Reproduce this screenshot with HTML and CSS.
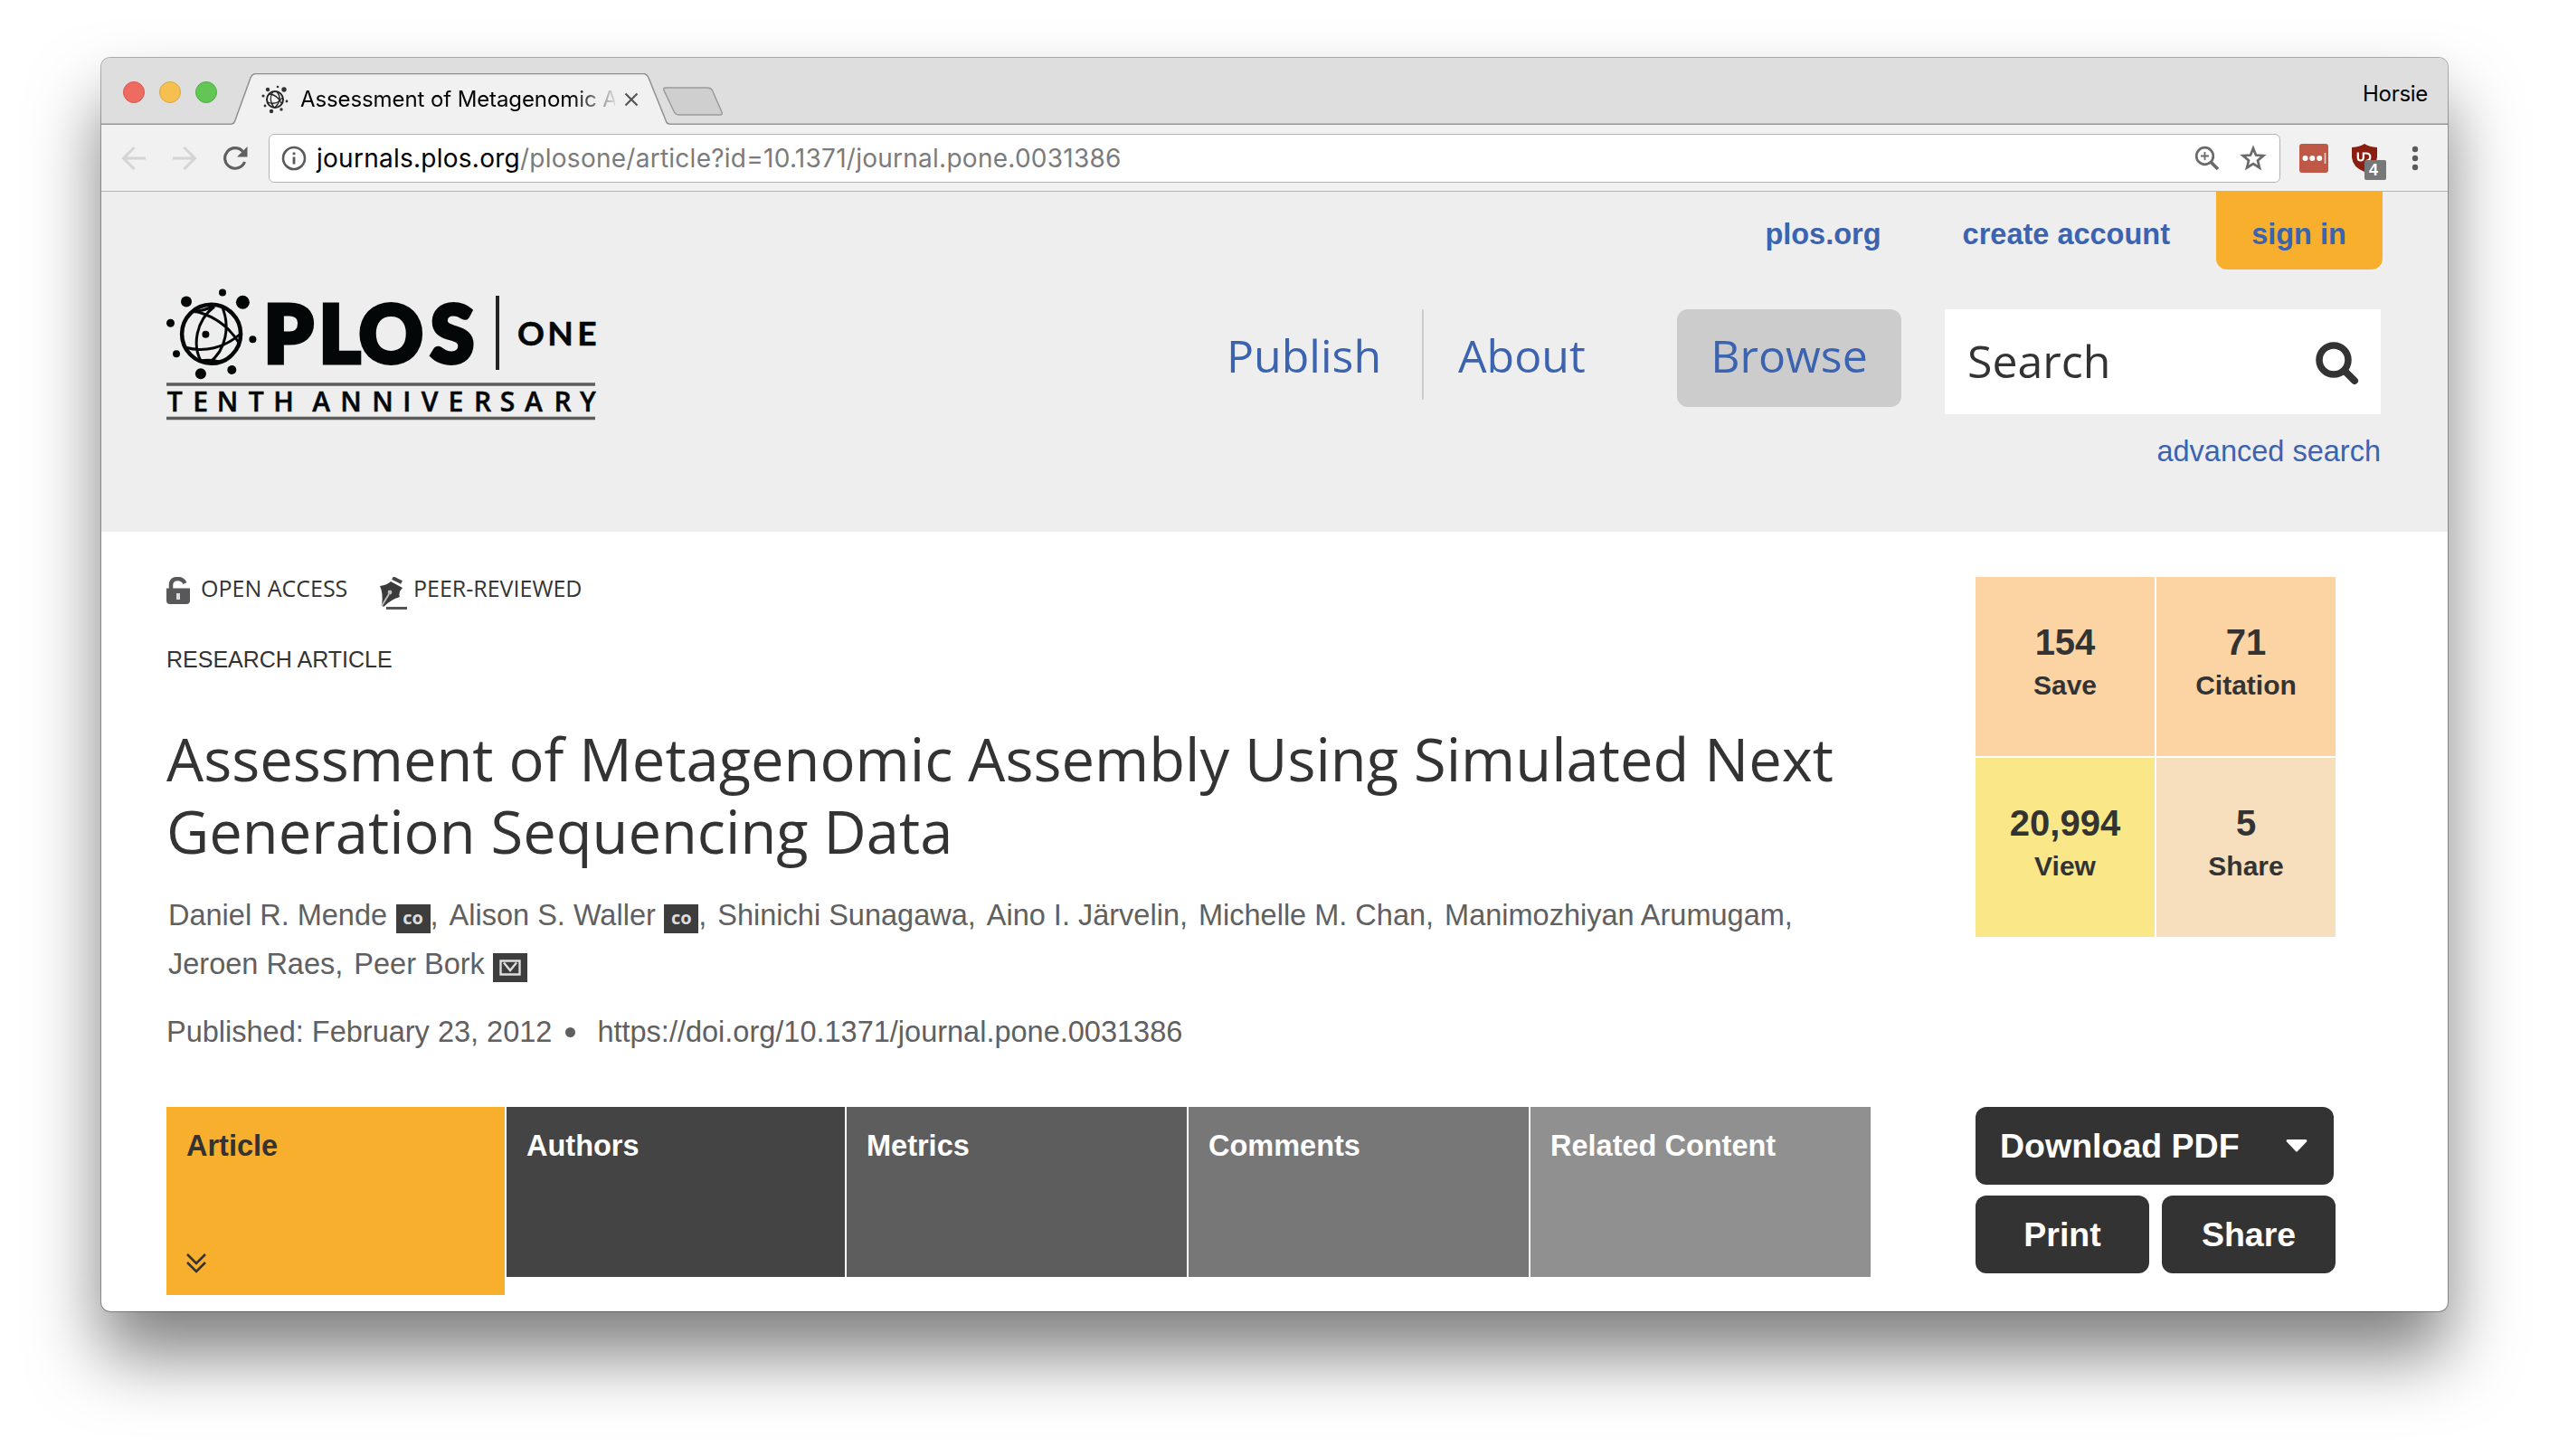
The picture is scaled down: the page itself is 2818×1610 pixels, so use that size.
FILE: index.html
```html
<!DOCTYPE html>
<html lang="en">
<head>
<meta charset="utf-8">
<title>Assessment of Metagenomic Assembly Using Simulated Next Generation Sequencing Data</title>
<link rel="stylesheet" href="styles.css">
</head>
<body>
<div class="window">
  <div class="tabstrip">
    <div class="lights"><i class="light red"></i><i class="light amber"></i><i class="light green"></i></div>
    <div class="tab">
      <svg class="tab-shape" viewBox="0 0 484 57" width="484" height="57"><path d="M0 57V56C3 56 3 54 4 52L21 5Q23 .5 27 .5H455Q459 .5 461 5L480 52Q481 56 484 56V57Z" fill="#f1f1f1"/><path d="M0 56C3 56 3 54 4 52L21 5Q23 .5 27 .5H455Q459 .5 461 5L480 52Q481 56 484 56" fill="none" stroke="#8f8f8f" stroke-width="1.5"/></svg>
      <svg class="favicon" viewBox="0 0 30 32" width="30" height="32"><g fill="none" stroke="#222" stroke-width="2"><circle cx="15" cy="16" r="9"/><path d="M13 7Q7 16 14 25M17 7Q24 16 15 25M7 19Q17 23 23 14M9 10Q18 11 22 20" stroke-width="1.3"/></g><g fill="#333"><circle cx="7" cy="5" r="2.2"/><circle cx="18" cy="2" r="1.3"/><circle cx="25" cy="5" r="2.7"/><circle cx="2" cy="12" r="1.6"/><circle cx="28" cy="18" r="1.4"/><circle cx="4" cy="23" r="1.4"/><circle cx="11" cy="29" r="2.2"/><circle cx="22" cy="27" r="1.7"/></g></svg>
      <span class="tab-title">Assessment of Metagenomic A</span>
      <svg class="tab-close" viewBox="0 0 16 16" width="16" height="16"><path d="M1.5 1.5l13 13M14.5 1.5l-13 13" stroke="#555" stroke-width="2.2"/></svg>
    </div>
    <svg class="newtab" viewBox="0 0 68 32" width="68" height="32"><path d="M4 1H50Q54 1 55.500 4L66 28Q67 31 64 31H19Q15 31 13.500 28L2 4Q1 1 4 1Z" fill="#cfcfcf" stroke="#9b9b9b" stroke-width="1.5"/></svg>
    <span class="profile">Horsie</span>
  </div>
  <div class="toolbar">
    <svg class="arrow" viewBox="0 0 28 28" width="28" height="28"><path d="M27 14H3M14.500 2L2.500 14L14.500 26" fill="none" stroke="#d4d4d4" stroke-width="3"/></svg>
    <svg class="arrow" viewBox="0 0 28 28" width="28" height="28"><path d="M1 14H25M13.500 2L25.500 14L13.500 26" fill="none" stroke="#d4d4d4" stroke-width="3"/></svg>
    <svg class="reload" viewBox="0 0 28 28" width="28" height="28"><path d="M22.500 6.500A11.300 11.300 0 1 0 24.500 18" fill="none" stroke="#5f5f5f" stroke-width="3.200"/><path d="M27.500 1V12.500H16Z" fill="#5f5f5f"/></svg>
    <div class="omnibox">
      <svg viewBox="0 0 28 28" width="28" height="28"><circle cx="14" cy="14" r="12" fill="none" stroke="#5a5a5a" stroke-width="2.600"/><path d="M12.600 12.500h2.800v8h-2.800zM12.600 7.500h2.800v2.800h-2.800z" fill="#5a5a5a"/></svg>
      <span class="url"><b>journals.plos.org</b>/plosone/article?id=10.1371/journal.pone.0031386</span>
      <svg viewBox="0 0 28 28" width="28" height="28"><g fill="none" stroke="#6a6a6a" stroke-width="2.700"><circle cx="11.500" cy="11.500" r="9.300"/><path d="M18.500 18.500L26 26" stroke-width="3.800"/><path d="M7 11.500h9M11.500 7v9" stroke-width="1.800"/></g></svg>
      <svg class="star" viewBox="0 0 30 30" width="30" height="30"><path d="M15 4L18 11.500L26.300 12.100L20 17.500L22 25.500L15 21.200L8 25.500L10 17.500L3.700 12.100L12 11.500Z" fill="none" stroke="#6a6a6a" stroke-width="2.700"/></svg>
    </div>
    <svg class="ext-dots" viewBox="0 0 32 32" width="32" height="32"><rect width="32" height="32" rx="3" fill="#c05847"/><g fill="#fff"><circle cx="6.500" cy="16" r="3"/><circle cx="14.300" cy="16" r="3"/><circle cx="22.200" cy="16" r="3"/></g><path d="M28.500 10v12" stroke="#f0cfc9" stroke-width="1.600"/></svg>
    <div class="ublock">
      <svg viewBox="0 0 28 32" width="28" height="32"><path d="M14 0Q19 3.500 28 4V15Q27 26 14 31Q1 26 0 15V4Q9 3.500 14 0Z" fill="#8a1f11"/><path d="M6.800 9.500v6q0 3 3 3t3-3V10.500h3q4.500 0 4.500 4t-4 4" fill="none" stroke="#fff" stroke-width="2.200"/></svg>
      <span class="count">4</span>
    </div>
    <svg class="menu" viewBox="0 0 8 28" width="8" height="28"><g fill="#5a5a5a"><circle cx="4" cy="4" r="3.200"/><circle cx="4" cy="14" r="3.200"/><circle cx="4" cy="24" r="3.200"/></g></svg>
  </div>

  <header class="site-header">
    <svg class="logo" viewBox="0 0 476 144" width="476" height="144">
      <g fill="#040707"><circle cx="22" cy="13.500" r="6"/><circle cx="62" cy="3.500" r="4"/><circle cx="84.400" cy="14.300" r="7.500"/><circle cx="4.500" cy="37.300" r="4.500"/><circle cx="43.400" cy="49.700" r="4"/><circle cx="95.400" cy="55.300" r="4"/><circle cx="11" cy="71.300" r="4"/><circle cx="37.900" cy="93.300" r="6"/><circle cx="72.300" cy="89" r="5"/></g>
      <g fill="none" stroke="#040707"><circle cx="49.600" cy="49.300" r="32.500" stroke-width="4.500"/><path d="M53 19C32 35 29 62 38 79M61 18C71 40 66 68 47 81M31 24C52 29 69 41 80 59M20 64C42 70 64 65 82 49M31 25Q42 23 52 19M36 79Q50 77 58 80" stroke-width="3"/></g>
      <g fill="#040707" text-anchor="middle">
        <text class="logo-name" x="135 191.500 248.300 316" y="81">PLOS</text>
        <text class="logo-one" x="402.900 435.600 465" y="61.700">ONE</text>
        <text class="logo-tag" x="9.300 37.500 67.500 99.200 129.500 150 171.100 203.900 239 265.800 291 319.900 349.500 377 406 438 465.900" y="135.200">TENTH ANNIVERSARY</text>
      </g>
      <path d="M366 7V89" stroke="#222" stroke-width="4"/><path d="M0 105H474M0 142.500H474" stroke="#5c5c5a" stroke-width="3.500"/>
    </svg>
    <div class="header-right">
      <div class="user-links"><a>plos.org</a><a>create account</a><a class="signin">sign in</a></div>
      <nav class="main-nav">
        <a class="publish">Publish</a><a class="about">About</a><a class="browse">Browse</a>
        <div class="search"><span>Search</span><svg viewBox="0 0 48 48" width="48" height="48"><circle cx="20" cy="20" r="16" fill="none" stroke="#333" stroke-width="7.500"/><path d="M32 32L43 43" stroke="#333" stroke-width="8" stroke-linecap="round"/></svg></div>
      </nav>
      <a class="advanced">advanced search</a>
    </div>
  </header>

  <main class="article">
    <section class="head">
      <div class="flags">
        <svg viewBox="0 0 26 30" width="26" height="30"><path d="M5 13V9Q5 2 12.500 2Q18 2 20.500 7" fill="none" stroke="#58585a" stroke-width="4.500"/><path d="M0 12.500H26V26Q26 30 22 30H4Q0 30 0 26Z" fill="#58585a"/><rect x="11" y="18" width="4" height="7" fill="#ddd"/></svg>
        <span class="flag-open">OPEN ACCESS</span>
        <svg viewBox="0 0 30 36" width="30" height="36"><path d="M14 1L24 6" stroke="#444" stroke-width="4"/><path d="M0 10Q8 9 12 5L25 12Q20 17 22 22Q12 25 4 33L2 31Q4 18 0 10Z" fill="#3a3a3a"/><circle cx="11" cy="17" r="2.400" fill="#bbb"/><path d="M2 32L10 19" stroke="#bbb" stroke-width="2"/><path d="M7 34.500H30" stroke="#555" stroke-width="3"/></svg>
        <span>PEER-REVIEWED</span>
      </div>
      <p class="type">RESEARCH ARTICLE</p>
      <h1>Assessment of Metagenomic Assembly Using Simulated Next Generation Sequencing Data</h1>
      <ul class="authors">
        <li>Daniel R. Mende<span class="badge">co</span>,</li><li>Alison S. Waller<span class="badge">co</span>,</li><li>Shinichi Sunagawa,</li><li>Aino I. Järvelin,</li><li>Michelle M. Chan,</li><li>Manimozhiyan Arumugam,</li><li>Jeroen Raes,</li><li>Peer Bork<span class="badge"><svg viewBox="0 0 24 18" width="24" height="18"><path d="M1.500 1.500H22.500V16.500H1.500ZM5 3.500L12 12L19 3.500" fill="none" stroke="#ddd" stroke-width="2.400"/></svg></span></li>
      </ul>
      <div class="published"><span>Published: February 23, 2012</span><i class="bullet"></i><span>https://doi.org/10.1371/journal.pone.0031386</span></div>
      <nav class="tabs">
        <a class="t1">Article<svg viewBox="0 0 24 24" width="24" height="24"><path d="M2 2L12 12L22 2M2 11L12 21L22 11" fill="none" stroke="#333" stroke-width="2.600"/></svg></a><a class="t2">Authors</a><a class="t3">Metrics</a><a class="t4">Comments</a><a class="t5">Related Content</a>
      </nav>
    </section>
    <aside class="side">
      <div class="metrics">
        <div class="m"><b>154</b><span>Save</span></div><div class="m"><b>71</b><span>Citation</span></div><div class="m view"><b>20,994</b><span>View</span></div><div class="m share"><b>5</b><span>Share</span></div>
      </div>
      <div class="actions">
        <a class="btn download">Download PDF<svg viewBox="0 0 24 14" width="24" height="14"><path d="M1.500 0H22.500Q24 1 23 2.500L13 13Q12 14 11 13L1 2.500Q0 1 1.500 0Z" fill="#fff"/></svg></a>
        <a class="btn">Print</a><a class="btn">Share</a>
      </div>
    </aside>
  </main>
</div>
</body>
</html>
```
FILE: styles.css
```css
* { box-sizing: border-box; }
body { margin: 0; padding: 64px 112px 0; height: 1610px; overflow: hidden; background: #fff; font-family: "Liberation Sans", Arial, sans-serif; font-size: 32.5px; color: #333; }
svg { display: block; flex: none; }
p, h1, ul { margin: 0; padding: 0; }
.window { width: 2594px; height: 1386px; border-radius: 10px; background: #fff; overflow: hidden; box-shadow: 0 0 0 1px rgba(0,0,0,.3), 0 48px 78px rgba(0,0,0,.5); }

/* browser chrome */
.tabstrip { display: flex; height: 74px; background: #dedede; box-shadow: inset 0 -1.5px #959595; font-family: Inter, sans-serif; font-size: 24px; color: #000; }
.lights { display: flex; gap: 16px; width: 144px; padding: 26px 0 0 24px; }
.light { width: 24px; height: 24px; border-radius: 50%; border: 1px solid; }
.red { background: #ed6b60; border-color: #d8574d; }
.amber { background: #f5c04f; border-color: #dba73e; }
.green { background: #62c655; border-color: #50ab45; }
.tab { position: relative; display: flex; width: 484px; height: 57px; margin-top: 17px; padding-left: 33px; }
.tab-shape { position: absolute; left: 0; top: 0; }
.favicon { position: relative; margin-top: 13px; }
.tab-title { position: relative; width: 348px; margin-left: 13px; line-height: 57px; letter-spacing: -.1px; white-space: nowrap; -webkit-mask-image: linear-gradient(90deg, #000 86%, rgba(0,0,0,.1)); mask-image: linear-gradient(90deg, #000 86%, rgba(0,0,0,.1)); }
.tab-close { position: relative; margin: 21px 0 0 10px; }
.newtab { margin: 32px 0 0 -8px; }
.profile { margin-left: auto; padding-right: 22px; line-height: 79px; letter-spacing: -.3px; }
.toolbar { display: flex; align-items: center; height: 74px; padding-left: 22px; background: #f1f1f1; border-bottom: 1.5px solid #b3b3b3; }
.arrow { margin-right: 28px; }
.omnibox { display: flex; align-items: center; width: 2224px; height: 54px; margin-left: 23px; padding: 0 14px 0 13px; background: #fff; border: 1.5px solid #b3b3b3; border-radius: 6px; }
.url { flex: 1; margin-left: 11px; font: 28px/50px Inter, sans-serif; letter-spacing: .26px; color: #7b7b7b; }
.url b { font-weight: 400; color: #000; }
.star { margin-left: 22px; }
.ext-dots { margin-left: 21px; }
.ublock { position: relative; margin-left: 26px; }
.count { position: absolute; left: 14px; top: 18px; width: 24px; height: 22px; border-radius: 2px; background: #777; color: #fff; font: bold 18px/22px "Liberation Sans", Arial, sans-serif; padding-left: 5px; }
.menu { margin-left: 38px; }

/* site header */
.site-header { display: flex; justify-content: space-between; height: 376px; padding: 0 72px; background: #eee; }
.logo { margin-top: 108px; overflow: visible; }
.logo-name { font: 900 87px Lato, sans-serif; stroke: #040707; stroke-width: 5px; }
.logo-one { font: 700 37px Lato, sans-serif; stroke: #040707; stroke-width: .6px; }
.logo-tag { font: 600 30px "Open Sans", sans-serif; stroke: #040707; stroke-width: .5px; }
.header-right { display: flex; flex-direction: column; align-items: flex-end; color: #3c63af; }
.user-links { display: flex; height: 86px; font-weight: bold; }
.user-links a { padding-top: 14px; line-height: 66px; margin-right: 90px; }
.user-links a:nth-child(2) { margin-right: 51px; }
.user-links .signin { width: 184px; margin: 0; padding-right: 1px; text-align: center; background: #f8af2d; border-radius: 0 0 12px 12px; }
.main-nav { display: grid; grid-template-columns: 218px 280px 248px 48px 482px; height: 116px; margin: 44px 2px 0 0; font: 50px/102px "Open Sans", sans-serif; }
.publish { height: 100px; border-right: 2px solid #ccc; }
.about { padding-left: 38px; }
.browse { height: 108px; text-align: center; background: #ccc; border-radius: 12px; }
.search { grid-column: 5; display: flex; justify-content: space-between; padding: 0 24px 0 25px; background: #fff; color: #333; line-height: 114px; }
.search svg { margin-top: 36px; }
.advanced { margin: 21px 2px 0 0; line-height: 40px; }

/* article */
.article { display: flex; justify-content: space-between; padding: 50px 124px 0 72px; }
.head { width: 1884px; }
.flags { display: flex; height: 36px; font: 25px/25px "Open Sans", sans-serif; }
.flags svg { margin-right: 7px; }
.flags svg:first-child { margin-right: 12px; }
.flag-open { width: 198px; }
.type { margin-top: 35px; font-size: 25px; line-height: 40px; }
h1 { margin-top: 50px; font: 400 65px/80px "Open Sans", sans-serif; letter-spacing: .03px; }
.authors { display: flex; flex-wrap: wrap; column-gap: 12px; margin-top: 26px; padding-left: 2px; list-style: none; line-height: 54px; color: #606060; }
.authors li { display: flex; }
.badge { display: flex; align-items: center; justify-content: center; width: 38px; height: 32px; margin: 15px 0 0 9.5px; padding-bottom: 2px; background: #3d3d3d; color: #ddd; font: bold 20px/28px "Open Sans", sans-serif; }
.badge svg { margin-top: 2px; }
.published { display: flex; align-items: center; margin-top: 28px; line-height: 40px; color: #606060; }
.bullet { width: 11px; height: 11px; margin: 0 24px 0 15px; border-radius: 50%; background: #606060; }
.tabs { display: grid; grid-template-columns: 374px 374px 376px 376px 376px; gap: 2px; align-items: start; margin-top: 63px; font-weight: bold; color: #fff; }
.tabs a { height: 188px; padding: 23px 22px; line-height: 41px; }
.tabs .t1 { height: 208px; background: #f8af2d; color: #333; }
.t1 svg { margin: 97px 0 0 -1px; }
.t2 { background: #444; }
.t3 { background: #5d5d5d; }
.t4 { background: #777; }
.t5 { background: #909090; }
.side { width: 398px; }
.metrics { display: grid; grid-template-columns: 198px 198px; gap: 2px; font-weight: bold; text-align: center; }
.m { display: flex; flex-direction: column; height: 198px; padding-top: 48px; background: #fcd4a3; font-size: 30px; line-height: 48px; }
.m b { font-size: 40px; line-height: 48px; }
.view { background: #fae788; }
.share { background: #f7debd; }
.actions { display: grid; grid-template-columns: 192px 192px; gap: 12px 14px; margin-top: 188px; }
.btn { display: block; height: 86px; border-radius: 12px; background: #333; color: #fff; font: bold 37.5px/86px "Liberation Sans", Arial, sans-serif; text-align: center; }
.download { grid-column: 1 / 3; display: flex; align-items: center; justify-content: space-between; width: 396px; padding: 0 29px 0 27px; }
```
